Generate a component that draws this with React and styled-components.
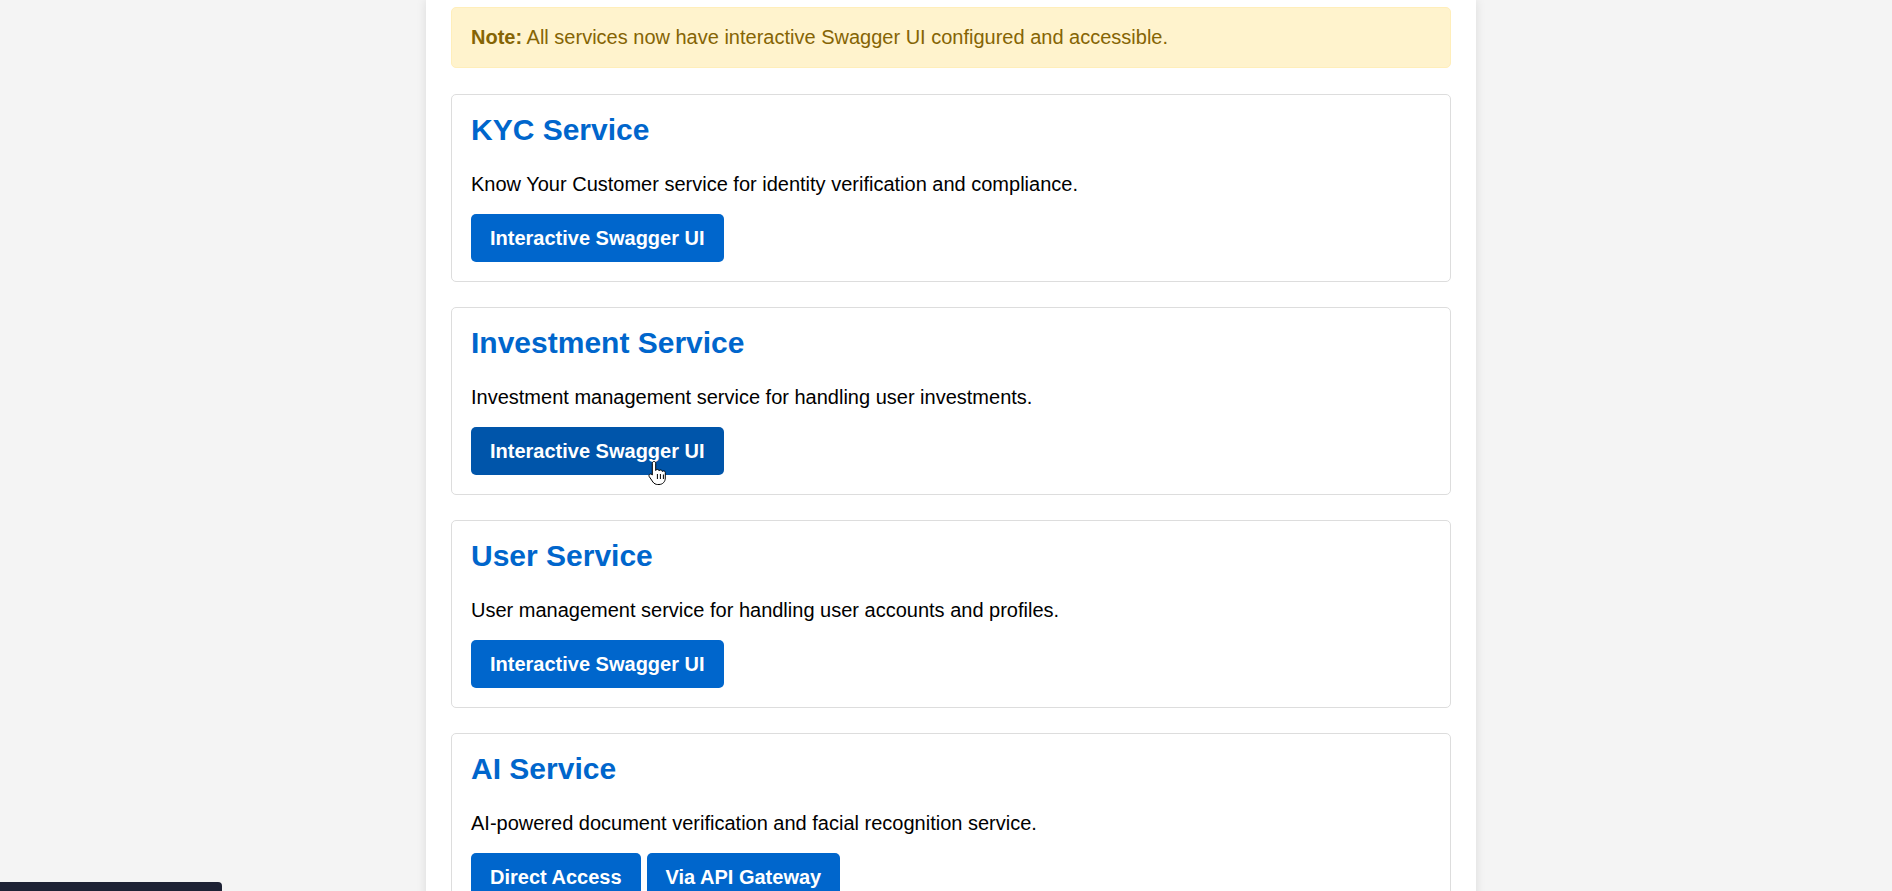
import React from 'react';
import styled, { createGlobalStyle } from 'styled-components';

const GlobalStyle = createGlobalStyle`
  html, body {
    margin: 0;
    padding: 0;
    height: 100%;
    overflow: hidden;
  }
  body {
    background-color: #f4f4f4;
    font-family: "Liberation Sans", Arial, sans-serif;
    color: #000;
  }
`;

const Page = styled.div`
  padding-left: 10px;
`;

const Container = styled.div`
  width: 1000px;
  margin: 0 auto;
  padding: 7px 25px 25px;
  background-color: #fff;
  box-shadow: 0 0 10px rgba(0, 0, 0, 0.1);
  min-height: 900px;
`;

const Note = styled.div`
  background-color: #fff3cd;
  border: 1px solid #ffeeba;
  border-radius: 5px;
  color: #856404;
  font-size: 20px;
  line-height: 23px;
  padding: 18px 19px;
  margin-bottom: 26px;

  strong {
    font-weight: bold;
  }
`;

const Card = styled.div`
  border: 1px solid #ddd;
  border-radius: 5px;
  padding: 18px 19px 19px;
  margin-bottom: 25px;
`;

const Title = styled.h2`
  margin: 0 0 25px;
  color: #0066cc;
  font-size: 30px;
  line-height: 34.5px;
  font-weight: bold;
`;

const Desc = styled.p`
  margin: 0 0 18.5px;
  font-size: 20px;
  line-height: 23px;
`;

const Actions = styled.div`
  display: flex;
  gap: 6px;
`;

const Button = styled.a`
  position: relative;
  display: inline-block;
  background-color: ${(props) => (props.hover ? '#0055aa' : '#0066cc')};
  color: #fff;
  font-size: 20px;
  line-height: 23px;
  font-weight: bold;
  padding: 12.5px 19px;
  border-radius: 5px;
  text-decoration: none;
  cursor: pointer;
`;

const Cursor = styled.svg`
  position: absolute;
  left: 177px;
  top: 33px;
  width: 19px;
  height: 26px;
  pointer-events: none;
`;

const StatusBar = styled.div`
  position: fixed;
  left: 0;
  bottom: 0;
  height: 9px;
  width: 222px;
  overflow: hidden;
  background-color: #1e2235;
  border-top-right-radius: 4px;
  color: #fff;
  font-size: 12px;
  line-height: 14px;
  padding: 7px 0 0 5px;
  box-sizing: border-box;
  white-space: nowrap;
`;

const HandCursor = () => (
  <Cursor viewBox="0 0 19 26">
    <path
      d="M6 1.5c1 0 1.7.7 1.7 1.7v7.3c.3-.7 1-1.1 1.7-1.1.9 0 1.6.6 1.7 1.4.3-.5.9-.8 1.5-.8.9 0 1.6.7 1.7 1.5.3-.4.8-.6 1.3-.6 1 0 1.7.8 1.7 1.7v5.4c0 3.7-2.6 6.5-6.3 6.5H9.7c-2 0-3.6-.9-4.8-2.5L1.3 16.7c-.6-.8-.4-1.9.4-2.4.8-.5 1.7-.3 2.3.4l.3.4V3.2C4.3 2.2 5 1.5 6 1.5z"
      fill="#fff"
      stroke="#000"
      strokeWidth="1"
      strokeLinejoin="round"
    />
    <path d="M9.4 14v5M12.4 14v5M15.4 14.5v4.5" stroke="#000" strokeWidth="1" />
  </Cursor>
);

const services = [
  {
    name: 'KYC Service',
    desc: 'Know Your Customer service for identity verification and compliance.',
    links: ['Interactive Swagger UI'],
  },
  {
    name: 'Investment Service',
    desc: 'Investment management service for handling user investments.',
    links: ['Interactive Swagger UI'],
    hover: true,
  },
  {
    name: 'User Service',
    desc: 'User management service for handling user accounts and profiles.',
    links: ['Interactive Swagger UI'],
  },
  {
    name: 'AI Service',
    desc: 'AI-powered document verification and facial recognition service.',
    links: ['Direct Access', 'Via API Gateway'],
  },
];

export default function App() {
  return (
    <>
      <GlobalStyle />
      <Page>
        <Container>
          <Note>
            <strong>Note:</strong> All services now have interactive Swagger UI configured and accessible.
          </Note>
          {services.map((s) => (
            <Card key={s.name}>
              <Title>{s.name}</Title>
              <Desc>{s.desc}</Desc>
              <Actions>
                {s.links.map((label) => (
                  <Button key={label} hover={s.hover}>
                    {label}
                    {s.hover && <HandCursor />}
                  </Button>
                ))}
              </Actions>
            </Card>
          ))}
        </Container>
      </Page>
      <StatusBar>localhost:8083/swagger-ui/index.html</StatusBar>
    </>
  );
}
